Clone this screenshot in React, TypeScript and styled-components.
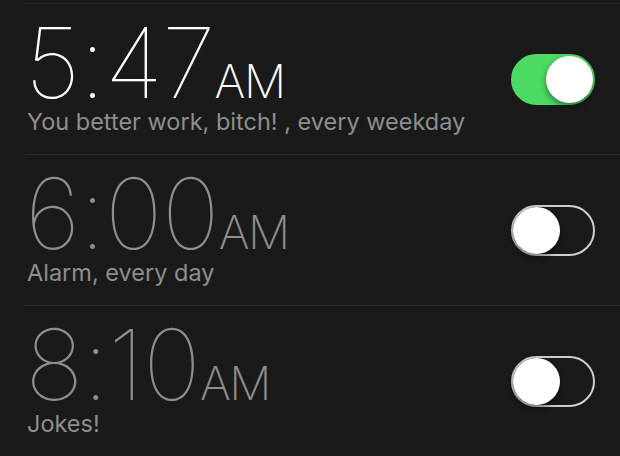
import styled, { createGlobalStyle } from "styled-components";

const GlobalStyle = createGlobalStyle`
  html, body {
    margin: 0;
    padding: 0;
    background: #1a1a1a;
  }
  body {
    font-family: Inter, "Noto Sans", "Liberation Sans", sans-serif;
    -webkit-font-smoothing: antialiased;
  }
`;

type Alarm = {
  time: string;
  label: string;
  on: boolean;
};

const alarms: Alarm[] = [
  { time: "5:47", label: "You better work, bitch! , every weekday", on: true },
  { time: "6:00", label: "Alarm, every day", on: false },
  { time: "8:10", label: "Jokes!", on: false },
];

const List = styled.div`
  width: 620px;
  height: 456px;
  overflow: hidden;
  padding-top: 3px;
  box-sizing: border-box;
  background: #1a1a1a;
`;

const Row = styled.div`
  display: flex;
  align-items: center;
  justify-content: space-between;
  height: 151px;
  box-sizing: border-box;
  margin-left: 25px;
  padding-right: 25px;
  border-top: 1px solid #2c2c2c;
`;

const Info = styled.div`
  align-self: flex-start;
  display: flex;
  flex-direction: column;
  gap: 2px;
  padding-top: 16px;
`;

const Time = styled.div<{ $on: boolean }>`
  display: flex;
  align-items: baseline;
  height: 86px;
  line-height: 86px;
  color: ${(p) => (p.$on ? "#ffffff" : "#8e8e8e")};
`;

const Digits = styled.span`
  font-size: 98px;
  font-weight: 140;
  letter-spacing: -1px;
`;

const Meridiem = styled.span`
  font-size: 47px;
  font-weight: 200;
  letter-spacing: -1.5px;
`;

const Label = styled.div`
  color: #8e8e8e;
  font-size: 23.5px;
  line-height: 28px;
  font-weight: 400;
  margin-left: 2px;
`;

const Track = styled.div<{ $on: boolean }>`
  position: relative;
  width: 84px;
  height: 51px;
  border-radius: 26px;
  box-sizing: border-box;
  background: ${(p) => (p.$on ? "#4cd964" : "transparent")};
  border: 2px solid ${(p) => (p.$on ? "#4cd964" : "#cfcfcf")};
  flex-shrink: 0;
`;

const Knob = styled.div<{ $on: boolean }>`
  position: absolute;
  top: 0;
  left: ${(p) => (p.$on ? "33px" : "0")};
  width: 47px;
  height: 47px;
  border-radius: 50%;
  background: #ffffff;
  box-shadow: 0 3px 6px rgba(0, 0, 0, 0.45);
`;

const Toggle = ({ on }: { on: boolean }) => (
  <Track $on={on}>
    <Knob $on={on} />
  </Track>
);

export default function App() {
  return (
    <>
      <GlobalStyle />
      <List>
        {alarms.map((a) => (
          <Row key={a.time}>
            <Info>
              <Time $on={a.on}>
                <Digits>{a.time}</Digits>
                <Meridiem>AM</Meridiem>
              </Time>
              <Label>{a.label}</Label>
            </Info>
            <Toggle on={a.on} />
          </Row>
        ))}
      </List>
    </>
  );
}
